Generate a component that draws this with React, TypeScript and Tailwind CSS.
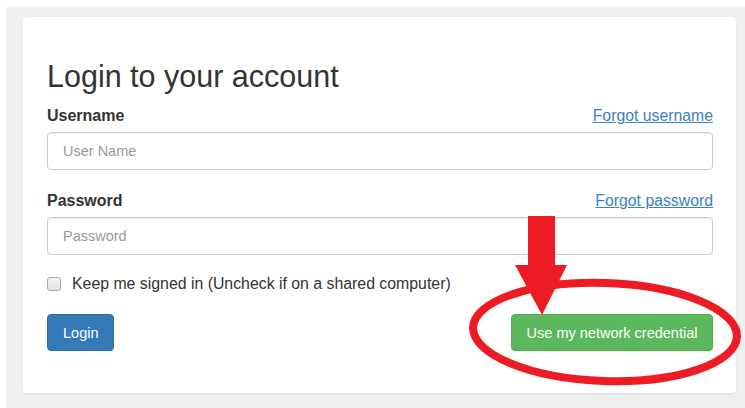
import React, { useState } from 'react';

const font = { fontFamily: '"Liberation Sans", Arial, sans-serif' };

function Field({
  label,
  link,
  placeholder,
  type,
  top,
}: {
  label: string;
  link: string;
  placeholder: string;
  type: string;
  top: string;
}) {
  return (
    <div className={top}>
      <div className="flex items-center justify-between leading-[20px]">
        <label className="text-[16px] font-bold text-[#333]">{label}</label>
        <a href="#" className="text-[15.8px] text-[#3b80c3] underline">
          {link}
        </a>
      </div>
      <input
        type={type}
        placeholder={placeholder}
        className="mt-[6px] block h-[38px] w-full rounded-[4px] border border-[#ccc] bg-white px-[15px] text-[14.5px] text-[#555] shadow-[inset_0_1px_1px_rgba(0,0,0,0.075)] outline-none placeholder:text-[#999]"
        style={font}
      />
    </div>
  );
}

export default function App() {
  const [keep, setKeep] = useState(false);

  return (
    <div className="min-h-screen bg-white pl-[6px] pt-[7px]" style={font}>
      <div className="bg-[#efefef] pb-[15px] pl-[17px] pr-[9px] pt-[10px]">
        <div className="relative rounded-[4px] bg-white pb-[42px] pl-[24px] pr-[23px] pt-[42px] shadow-[0_1px_2px_rgba(0,0,0,0.08)]">
          <h2 className="text-[30.5px] font-normal leading-[34px] text-[#333]">
            Login to your account
          </h2>

          <Field
            label="Username"
            link="Forgot username"
            placeholder="User Name"
            type="text"
            top="mt-[13px]"
          />
          <Field
            label="Password"
            link="Forgot password"
            placeholder="Password"
            type="password"
            top="mt-[21px]"
          />

          <label
            className="mt-[19px] flex cursor-pointer items-center text-[15.85px] leading-[20px] text-[#333]"
            onClick={() => setKeep(!keep)}
          >
            <span className="flex h-[14px] w-[14px] items-center justify-center rounded-[3px] border border-[#a9a9a9] bg-[linear-gradient(#f4f4f4,#e2e2e2)]">
              {keep && <span className="h-[6px] w-[6px] rounded-[1px] bg-[#555]" />}
            </span>
            <span className="ml-[11px]">
              Keep me signed in (Uncheck if on a shared computer)
            </span>
          </label>

          <div className="mt-[20px] flex items-center justify-between">
            <button className="h-[37px] rounded-[4px] border border-[#2e6da4] bg-[#337ab7] px-[15px] pt-[2px] text-[14.5px] text-white">
              Login
            </button>
            <button className="h-[37px] w-[202px] rounded-[4px] border border-[#4cae4c] bg-[#5cb85c] pt-[2px] text-[14.5px] text-white">
              Use my network credential
            </button>
          </div>

          {/* red callout: arrow + ring around the network login button */}
          <svg
            className="pointer-events-none absolute left-0 top-0 h-full w-full overflow-visible"
            viewBox="0 0 713 376"
          >
            <rect x="505" y="199" width="27" height="50" fill="#ed1c24" />
            <polygon points="492,248 544,248 519,298" fill="#ed1c24" />
            <ellipse
              cx="582"
              cy="315"
              rx="132"
              ry="49"
              fill="none"
              stroke="#ed1c24"
              strokeWidth="8"
              transform="rotate(2 582 315)"
            />
          </svg>
        </div>
      </div>
    </div>
  );
}
